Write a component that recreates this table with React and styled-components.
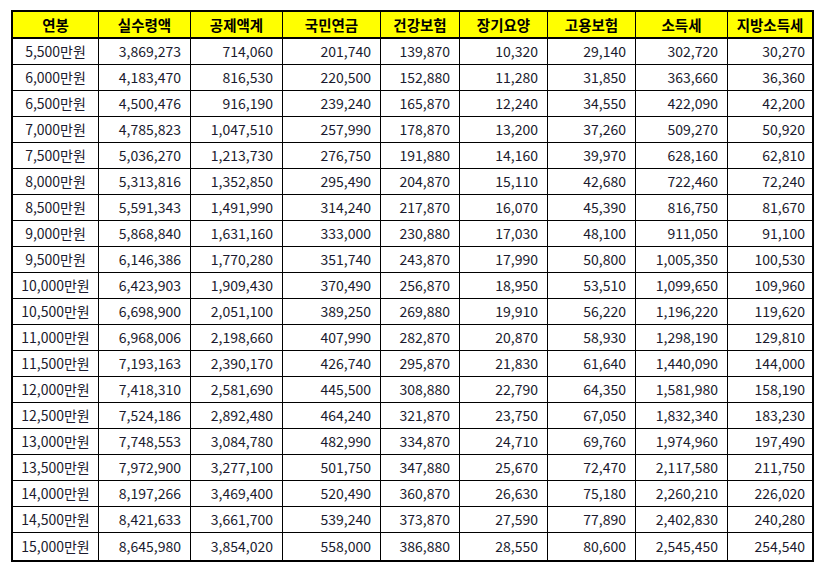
import React from "react";
import { styled, createGlobalStyle } from "styled-components";

const GlobalStyle = createGlobalStyle`
  html, body {
    margin: 0;
    padding: 0;
    background: #ffffff;
  }
  body {
    font-family: "Noto Sans CJK KR", "Noto Sans", sans-serif;
  }
`;

const headers = [
  "연봉",
  "실수령액",
  "공제액계",
  "국민연금",
  "건강보험",
  "장기요양",
  "고용보험",
  "소득세",
  "지방소득세",
];

// 각 열의 폭 (오른쪽 선 포함)
const widths = [86, 92, 92, 98, 79, 88, 88, 92, 84];

const rows = [
  ["5,500만원", "3,869,273", "714,060", "201,740", "139,870", "10,320", "29,140", "302,720", "30,270"],
  ["6,000만원", "4,183,470", "816,530", "220,500", "152,880", "11,280", "31,850", "363,660", "36,360"],
  ["6,500만원", "4,500,476", "916,190", "239,240", "165,870", "12,240", "34,550", "422,090", "42,200"],
  ["7,000만원", "4,785,823", "1,047,510", "257,990", "178,870", "13,200", "37,260", "509,270", "50,920"],
  ["7,500만원", "5,036,270", "1,213,730", "276,750", "191,880", "14,160", "39,970", "628,160", "62,810"],
  ["8,000만원", "5,313,816", "1,352,850", "295,490", "204,870", "15,110", "42,680", "722,460", "72,240"],
  ["8,500만원", "5,591,343", "1,491,990", "314,240", "217,870", "16,070", "45,390", "816,750", "81,670"],
  ["9,000만원", "5,868,840", "1,631,160", "333,000", "230,880", "17,030", "48,100", "911,050", "91,100"],
  ["9,500만원", "6,146,386", "1,770,280", "351,740", "243,870", "17,990", "50,800", "1,005,350", "100,530"],
  ["10,000만원", "6,423,903", "1,909,430", "370,490", "256,870", "18,950", "53,510", "1,099,650", "109,960"],
  ["10,500만원", "6,698,900", "2,051,100", "389,250", "269,880", "19,910", "56,220", "1,196,220", "119,620"],
  ["11,000만원", "6,968,006", "2,198,660", "407,990", "282,870", "20,870", "58,930", "1,298,190", "129,810"],
  ["11,500만원", "7,193,163", "2,390,170", "426,740", "295,870", "21,830", "61,640", "1,440,090", "144,000"],
  ["12,000만원", "7,418,310", "2,581,690", "445,500", "308,880", "22,790", "64,350", "1,581,980", "158,190"],
  ["12,500만원", "7,524,186", "2,892,480", "464,240", "321,870", "23,750", "67,050", "1,832,340", "183,230"],
  ["13,000만원", "7,748,553", "3,084,780", "482,990", "334,870", "24,710", "69,760", "1,974,960", "197,490"],
  ["13,500만원", "7,972,900", "3,277,100", "501,750", "347,880", "25,670", "72,470", "2,117,580", "211,750"],
  ["14,000만원", "8,197,266", "3,469,400", "520,490", "360,870", "26,630", "75,180", "2,260,210", "226,020"],
  ["14,500만원", "8,421,633", "3,661,700", "539,240", "373,870", "27,590", "77,890", "2,402,830", "240,280"],
  ["15,000만원", "8,645,980", "3,854,020", "558,000", "386,880", "28,550", "80,600", "2,545,450", "254,540"],
];

function App() {
  return (
    <Page>
      <GlobalStyle />
      <Table>
        <colgroup>
          {widths.map((w, i) => (
            <Col key={i} $w={w} />
          ))}
        </colgroup>
        <thead>
          <tr>
            {headers.map((h) => (
              <Th key={h}>{h}</Th>
            ))}
          </tr>
        </thead>
        <tbody>
          {rows.map((row) => (
            <Tr key={row[0]}>
              {row.map((cell, i) => (
                <Td key={i} $first={i === 0}>
                  {cell}
                </Td>
              ))}
            </Tr>
          ))}
        </tbody>
      </Table>
    </Page>
  );
}

const Page = styled.div`
  padding: 10px 0 0 11px;
`;

const Table = styled.table`
  width: 803px;
  table-layout: fixed;
  border-collapse: separate;
  border-spacing: 0;
  border: 2px solid #000;
  box-sizing: border-box;
`;

const Col = styled.col`
  width: ${({ $w }) => $w}px;
`;

const Th = styled.th`
  height: 25px;
  padding: 0;
  background-color: #ffff00;
  color: #000;
  font-size: 14.5px;
  font-weight: 700;
  text-align: center;
  line-height: 25px;
  border-right: 1px solid #000;
  border-bottom: 2px solid #000;
  box-sizing: border-box;
  height: 27px;
  &:last-child {
    border-right: none;
  }
`;

const Tr = styled.tr`
  &:last-child td {
    border-bottom: none;
    height: 27px;
  }
`;

const Td = styled.td`
  height: 26px;
  padding: 0 ${({ $first }) => ($first ? "0" : "9px")} 0 0;
  font-size: 14px;
  color: #1a1a2e;
  line-height: 25px;
  text-align: ${({ $first }) => ($first ? "center" : "right")};
  white-space: nowrap;
  border-right: 1px solid #000;
  border-bottom: 1px solid #000;
  box-sizing: border-box;
  &:last-child {
    border-right: none;
    padding-right: 7px;
  }
`;

export default App;
